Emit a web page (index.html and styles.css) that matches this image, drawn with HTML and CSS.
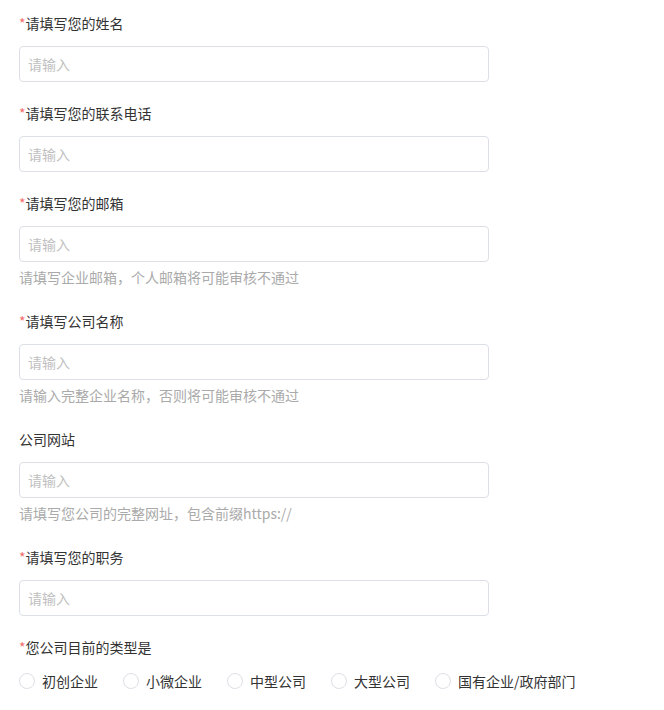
FILE: index.html
```html
<!DOCTYPE html>
<html lang="zh-CN">
<head>
<meta charset="utf-8">
<link rel="stylesheet" href="styles.css">
</head>
<body>
<form class="form">
  <div class="item">
    <div class="label"><span class="req">*</span>请填写您的姓名</div>
    <input class="input" placeholder="请输入">
  </div>
  <div class="item">
    <div class="label"><span class="req">*</span>请填写您的联系电话</div>
    <input class="input" placeholder="请输入">
  </div>
  <div class="item">
    <div class="label"><span class="req">*</span>请填写您的邮箱</div>
    <input class="input" placeholder="请输入">
    <div class="hint">请填写企业邮箱，个人邮箱将可能审核不通过</div>
  </div>
  <div class="item">
    <div class="label"><span class="req">*</span>请填写公司名称</div>
    <input class="input" placeholder="请输入">
    <div class="hint">请输入完整企业名称，否则将可能审核不通过</div>
  </div>
  <div class="item">
    <div class="label">公司网站</div>
    <input class="input" placeholder="请输入">
    <div class="hint">请填写您公司的完整网址，包含前缀https://</div>
  </div>
  <div class="item">
    <div class="label"><span class="req">*</span>请填写您的职务</div>
    <input class="input" placeholder="请输入">
  </div>
  <div class="item">
    <div class="label"><span class="req">*</span>您公司目前的类型是</div>
    <div class="radios">
      <label class="radio"><span class="dot"></span>初创企业</label>
      <label class="radio"><span class="dot"></span>小微企业</label>
      <label class="radio"><span class="dot"></span>中型公司</label>
      <label class="radio"><span class="dot"></span>大型公司</label>
      <label class="radio"><span class="dot"></span>国有企业/政府部门</label>
    </div>
  </div>
</form>
</body>
</html>
```

FILE: styles.css
```css
html, body {
  margin: 0;
  padding: 0;
  background: #fff;
}
body {
  font-family: "Microsoft YaHei", "Noto Sans CJK SC", "Noto Sans", sans-serif;
  font-size: 14px;
  color: #333333;
}
.form {
  padding: 13px 19px 0 19px;
  width: 470px;
}
.item {
  display: flex;
  flex-direction: column;
  padding-bottom: 21px;
}
.item:has(.hint) {
  padding-bottom: 22px;
}
.label {
  height: 20px;
  line-height: 20px;
  margin-bottom: 13px;
  color: #333333;
}
.req {
  color: #f56c6c;
}
.input {
  box-sizing: border-box;
  width: 470px;
  height: 36px;
  border: 1px solid #dcdfe6;
  border-radius: 4px;
  padding: 0 8px;
  font: inherit;
  font-size: 14px;
  color: #606266;
  outline: none;
  margin: 0;
}
.input::placeholder {
  color: #bfbfbf;
}
.hint {
  margin-top: 3px;
  line-height: 24px;
  color: #aaaaaa;
}
.radios {
  display: flex;
  align-items: center;
  height: 22px;
}
.radio {
  display: flex;
  align-items: center;
  margin-right: 25px;
  color: #333333;
  white-space: nowrap;
}
.dot {
  box-sizing: border-box;
  width: 16px;
  height: 16px;
  border: 1px solid #dcdfe6;
  border-radius: 50%;
  margin-right: 7px;
}
```
